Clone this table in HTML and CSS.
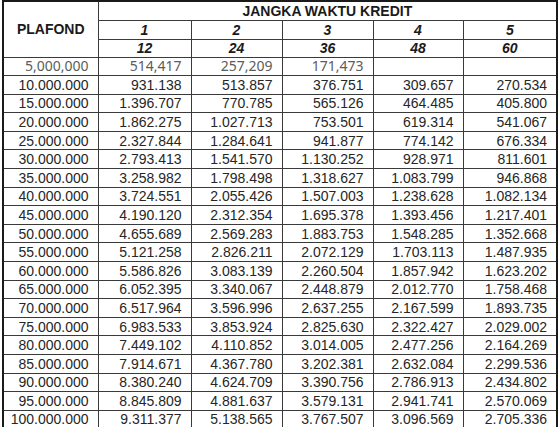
FILE: index.html
```html
<!DOCTYPE html>
<html>
<head>
<meta charset="utf-8">
<link rel="stylesheet" href="styles.css">
</head>
<body>
<table class="tbl">
<colgroup>
<col class="c0"><col class="c1"><col class="c2"><col class="c3"><col class="c4"><col class="c5">
</colgroup>
<thead>
<tr class="h1"><th rowspan="3" class="plafond">PLAFOND</th><th colspan="5" class="jangka">JANGKA WAKTU KREDIT</th></tr>
<tr class="h2"><th class="it">1</th><th class="it">2</th><th class="it">3</th><th class="it">4</th><th class="it">5</th></tr>
<tr class="h3"><th class="it">12</th><th class="it">24</th><th class="it">36</th><th class="it">48</th><th class="it">60</th></tr>
</thead>
<tbody>
<tr class="first"><td>5,000,000</td><td>514,417</td><td>257,209</td><td>171,473</td><td></td><td></td></tr>
<tr><td>10.000.000</td><td>931.138</td><td>513.857</td><td>376.751</td><td>309.657</td><td>270.534</td></tr>
<tr><td>15.000.000</td><td>1.396.707</td><td>770.785</td><td>565.126</td><td>464.485</td><td>405.800</td></tr>
<tr><td>20.000.000</td><td>1.862.275</td><td>1.027.713</td><td>753.501</td><td>619.314</td><td>541.067</td></tr>
<tr><td>25.000.000</td><td>2.327.844</td><td>1.284.641</td><td>941.877</td><td>774.142</td><td>676.334</td></tr>
<tr><td>30.000.000</td><td>2.793.413</td><td>1.541.570</td><td>1.130.252</td><td>928.971</td><td>811.601</td></tr>
<tr><td>35.000.000</td><td>3.258.982</td><td>1.798.498</td><td>1.318.627</td><td>1.083.799</td><td>946.868</td></tr>
<tr><td>40.000.000</td><td>3.724.551</td><td>2.055.426</td><td>1.507.003</td><td>1.238.628</td><td>1.082.134</td></tr>
<tr><td>45.000.000</td><td>4.190.120</td><td>2.312.354</td><td>1.695.378</td><td>1.393.456</td><td>1.217.401</td></tr>
<tr><td>50.000.000</td><td>4.655.689</td><td>2.569.283</td><td>1.883.753</td><td>1.548.285</td><td>1.352.668</td></tr>
<tr><td>55.000.000</td><td>5.121.258</td><td>2.826.211</td><td>2.072.129</td><td>1.703.113</td><td>1.487.935</td></tr>
<tr><td>60.000.000</td><td>5.586.826</td><td>3.083.139</td><td>2.260.504</td><td>1.857.942</td><td>1.623.202</td></tr>
<tr><td>65.000.000</td><td>6.052.395</td><td>3.340.067</td><td>2.448.879</td><td>2.012.770</td><td>1.758.468</td></tr>
<tr><td>70.000.000</td><td>6.517.964</td><td>3.596.996</td><td>2.637.255</td><td>2.167.599</td><td>1.893.735</td></tr>
<tr><td>75.000.000</td><td>6.983.533</td><td>3.853.924</td><td>2.825.630</td><td>2.322.427</td><td>2.029.002</td></tr>
<tr><td>80.000.000</td><td>7.449.102</td><td>4.110.852</td><td>3.014.005</td><td>2.477.256</td><td>2.164.269</td></tr>
<tr><td>85.000.000</td><td>7.914.671</td><td>4.367.780</td><td>3.202.381</td><td>2.632.084</td><td>2.299.536</td></tr>
<tr><td>90.000.000</td><td>8.380.240</td><td>4.624.709</td><td>3.390.756</td><td>2.786.913</td><td>2.434.802</td></tr>
<tr><td>95.000.000</td><td>8.845.809</td><td>4.881.637</td><td>3.579.131</td><td>2.941.741</td><td>2.570.069</td></tr>
<tr><td>100.000.000</td><td>9.311.377</td><td>5.138.565</td><td>3.767.507</td><td>3.096.569</td><td>2.705.336</td></tr>
</tbody>
</table>
</body>
</html>
```

FILE: styles.css
```css
html, body {
  margin: 0;
  padding: 0;
  background: #ffffff;
}
body {
  padding-left: 2px;
}
.tbl {
  border-collapse: collapse;
  table-layout: fixed;
  width: 556px;
  border: 2px solid #1a1a1a;
  font-family: "Liberation Sans", Arial, sans-serif;
  font-size: 14px;
  color: #262626;
}
.c0 { width: 95px; }
.c1 { width: 93px; }
.c2 { width: 91px; }
.c3 { width: 91px; }
.c4 { width: 90px; }
.c5 { width: 94px; }
.tbl th, .tbl td {
  border: 1px solid #3a3a3a;
  padding: 0 9px 0 0;
  line-height: 16px;
  white-space: nowrap;
  overflow: hidden;
}
.tbl td {
  text-align: right;
}
.tbl th {
  font-weight: bold;
  text-align: center;
  padding: 0;
  color: #1a1a1a;
}
.tbl tr { height: 18.6px; }
.tbl .h1 { height: 19px; }
.tbl .h2 { height: 19px; }
.tbl .h3 { height: 18px; }
.tbl .it {
  font-style: italic;
}
.tbl .plafond {
  font-size: 14px;
}
.tbl .first td {
  font-family: "Noto Sans", "Liberation Sans", sans-serif;
  font-size: 14px;
  color: #5c5c5c;
}
```
